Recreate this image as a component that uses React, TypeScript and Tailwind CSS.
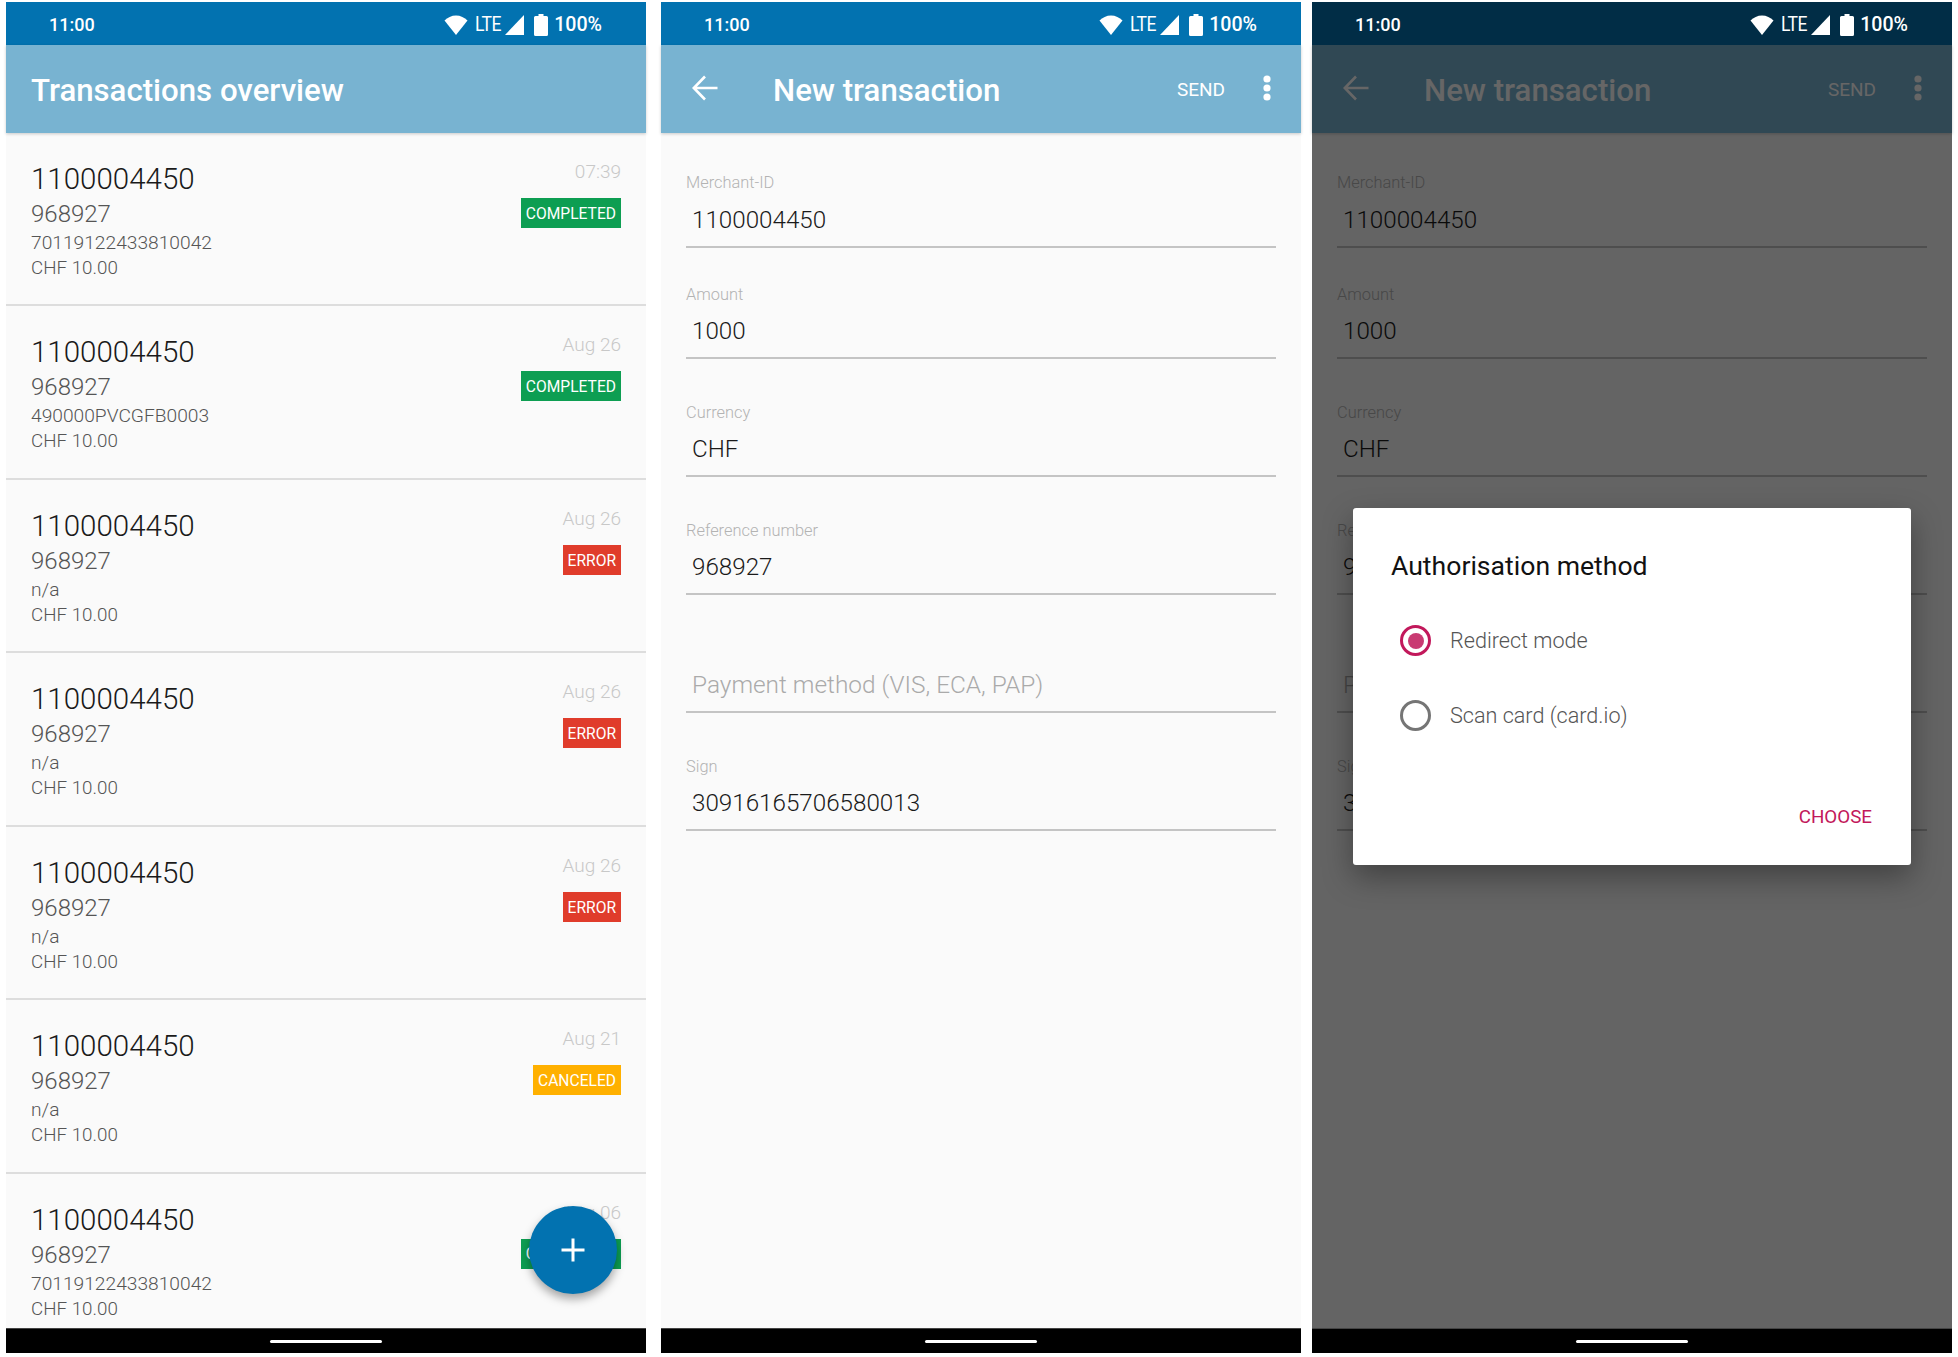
import React from "react";

function StatusBar({ dim = false }: { dim?: boolean }) {
  return (
    <div className={`h-[43px] shrink-0 flex items-center pt-[3px] pl-[43px] pr-[44px] text-white ${dim ? "bg-[#012d46]" : "bg-[#0272b0]"}`}>
      <span className="text-[18px] font-medium leading-none">11:00</span>
      <div className="ml-auto flex items-center">
        <svg width="24" height="20" viewBox="0 0 24 20" className="mr-[7px] -mt-[1px]"><path d="M12 20 L0.5 5.5 C3.5 2.5 7.5 0.5 12 0.5 C16.5 0.5 20.5 2.5 23.5 5.5 Z" fill="white" /></svg>
        <span className="text-[19.5px] leading-none tracking-[-0.6px] scale-x-90 origin-left w-[30px]">LTE</span>
        <svg width="19" height="20" viewBox="0 0 19 20" className="mr-[10px] -mt-[1px]"><path d="M19 0 V20 H0 Z" fill="white" /></svg>
        <svg width="14" height="22" viewBox="0 0 14 22" className="mr-[6px] -mt-[1px]"><path d="M4.5 0 H9.5 V2 H12.5 A1.5 1.5 0 0 1 14 3.5 V20.5 A1.5 1.5 0 0 1 12.5 22 H1.5 A1.5 1.5 0 0 1 0 20.5 V3.5 A1.5 1.5 0 0 1 1.5 2 H4.5 Z" fill="white" /></svg>
        <span className="text-[19.6px] font-medium leading-none">100%</span>
      </div>
    </div>
  );
}

function Toolbar({ children }: { children: React.ReactNode }) {
  return (
    <div className="relative h-[88px] shrink-0 flex items-center bg-[#78b3d1] text-white shadow-[0_1px_3px_rgba(0,0,0,0.2)]">
      {children}
    </div>
  );
}

function NavBar() {
  return (
    <div className="relative z-10 h-[25px] shrink-0 bg-black border-t border-t-[#444] flex items-center justify-center">
      <div className="w-[112px] h-[3px] rounded-full bg-white" />
    </div>
  );
}

const rows = [
  { time: "07:39", ref: "70119122433810042", status: "COMPLETED", color: "bg-[#0d9e52]" },
  { time: "Aug 26", ref: "490000PVCGFB0003", status: "COMPLETED", color: "bg-[#0d9e52]" },
  { time: "Aug 26", ref: "n/a", status: "ERROR", color: "bg-[#e03c2b]" },
  { time: "Aug 26", ref: "n/a", status: "ERROR", color: "bg-[#e03c2b]" },
  { time: "Aug 26", ref: "n/a", status: "ERROR", color: "bg-[#e03c2b]" },
  { time: "Aug 21", ref: "n/a", status: "CANCELED", color: "bg-[#ffb000]" },
  { time: "Aug 06", ref: "70119122433810042", status: "COMPLETED", color: "bg-[#0d9e52]" },
];

function Row({ r }: { r: (typeof rows)[number] }) {
  return (
    <div className="h-[173.45px] shrink-0 flex justify-between border-b-2 border-b-[#dddddd] pl-[25px] pr-[25px] pt-[27px]">
      <div className="flex flex-col">
        <div className="text-[29.5px] leading-[38px] text-[#1a1a1a] font-light">1100004450</div>
        <div className="text-[24px] leading-[34px] -mt-[1px] text-[#555] font-light">968927</div>
        <div className="text-[19.2px] leading-[25px] -mt-[1px] text-[#555] font-light">{r.ref}</div>
        <div className="text-[18.8px] leading-[25px] mt-[1px] text-[#555] font-light">CHF 10.00</div>
      </div>
      <div className="flex flex-col items-end">
        <div className="text-[19px] leading-[24px] text-[#c8c8c8] font-light">{r.time}</div>
        <div className={`mt-[14px] h-[30px] pt-[3px] px-[5px] flex items-center text-[15.6px] text-white ${r.color}`}>{r.status}</div>
      </div>
    </div>
  );
}

function Field({ label, value, top, labelH = 22 }: { label?: string; value: string; top: number; labelH?: number }) {
  return (
    <div style={{ marginTop: top }}>
      {label ? (
        <div style={{ height: labelH, lineHeight: `${labelH + 2}px` }} className="text-[16.4px] text-[#b3b3b3] font-light">{label}</div>
      ) : (
        <div style={{ height: labelH }} />
      )}
      <div className={`h-[52px] leading-[52px] pl-[6px] border-b-2 box-content border-b-[#c4c4c4] ${label ? "text-[24.2px] text-[#1a1a1a] font-light" : "text-[24.4px] text-[#aaaaaa] font-light"}`}>{value}</div>
    </div>
  );
}

function Form() {
  return (
    <div className="flex-1 bg-[#fafafa] px-[25px] pt-[1px]">
      <Field label="Merchant-ID" value="1100004450" top={36} labelH={24} />
      <Field label="Amount" value="1000" top={35} />
      <Field label="Currency" value="CHF" top={42} />
      <Field label="Reference number" value="968927" top={42} />
      <Field value="Payment method (VIS, ECA, PAP)" top={42} />
      <Field label="Sign" value="30916165706580013" top={42} />
    </div>
  );
}

function NewTxToolbar() {
  return (
    <Toolbar>
      <svg width="26" height="26" viewBox="0 0 26 26" className="ml-[31px] mt-[-3px]" fill="none" stroke="white" strokeWidth="2.6"><path d="M25.5 13 H2.5 M13 1.5 L1.8 13 L13 24.5" /></svg>
      <span className="ml-[55px] text-[31.2px] font-medium leading-none mt-[3px]">New transaction</span>
      <span className="ml-auto text-[19px] font-[450] mt-[2px]">SEND</span>
      <svg width="8" height="26" viewBox="0 0 8 26" className="ml-[38px] mr-[30px] mt-[-3px]" fill="white"><circle cx="4" cy="4" r="3.6" /><circle cx="4" cy="13" r="3.6" /><circle cx="4" cy="22" r="3.6" /></svg>
    </Toolbar>
  );
}

function Radio({ on, label }: { on?: boolean; label: string }) {
  return (
    <div className="flex items-center h-[75px] pl-[47px]">
      <span className={`w-[31px] h-[31px] rounded-full border-[3px] flex items-center justify-center ${on ? "border-[#c2185b]" : "border-[#757575]"}`}>
        {on && <span className="w-[16px] h-[16px] rounded-full bg-[#c93a72]" />}
      </span>
      <span className="ml-[19px] mt-[2px] text-[21.6px] font-light text-[#555]">{label}</span>
    </div>
  );
}

export default function App() {
  return (
    <div className="w-[1958px] h-[1357px] bg-white flex pt-[2px] pb-[4px] pl-[6px] font-[Roboto,sans-serif] overflow-hidden">
      <div className="relative w-[640px] flex flex-col">
        <StatusBar />
        <Toolbar>
          <span className="ml-[25px] text-[31.2px] font-medium leading-none mt-[3px]">Transactions overview</span>
        </Toolbar>
        <div className="flex-1 bg-[#fafafa] overflow-hidden">
          {rows.map((r, i) => <Row key={i} r={r} />)}
        </div>
        <NavBar />
        <button className="absolute right-[29px] bottom-[59px] w-[88px] h-[88px] rounded-full bg-[#0272b0] flex items-center justify-center shadow-[0_5px_10px_rgba(0,0,0,0.35)]">
          <svg width="24" height="24" viewBox="0 0 24 24" stroke="white" strokeWidth="3"><path d="M0.5 12 H23.5 M12 0.5 V23.5" /></svg>
        </button>
      </div>

      <div className="relative w-[640px] ml-[15px] flex flex-col">
        <StatusBar />
        <NewTxToolbar />
        <Form />
        <NavBar />
      </div>

      <div className="relative w-[640px] ml-[11px] flex flex-col">
        <div className="relative z-10"><StatusBar dim /></div>
        <NewTxToolbar />
        <Form />
        <NavBar />
        <div className="absolute left-0 right-0 top-[43px] bottom-[25px] bg-black/60 flex items-center justify-center">
          <div className="w-[558px] h-[357px] bg-white rounded-[3px] shadow-[0_12px_30px_rgba(0,0,0,0.35)] flex flex-col">
            <div className="pl-[38px] pt-[41px] text-[26.6px] leading-[34px] font-[450] text-[#111]">Authorisation method</div>
            <div className="mt-[20px]">
              <Radio on label="Redirect mode" />
              <Radio label="Scan card (card.io)" />
            </div>
            <div className="mt-auto mb-[34px] pr-[39px] text-right text-[18.8px] font-[450] text-[#c2185b]">CHOOSE</div>
          </div>
        </div>
      </div>
    </div>
  );
}
